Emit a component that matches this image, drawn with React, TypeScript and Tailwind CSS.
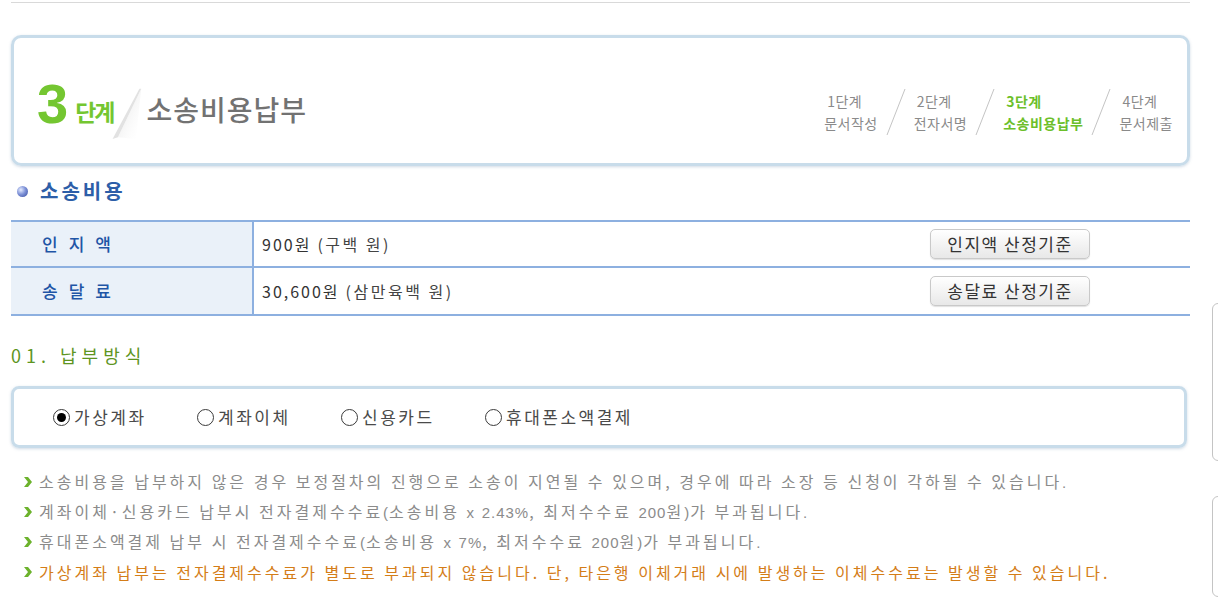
import React from 'react';

const KR = { fontFamily: '"Noto Sans CJK KR", "Noto Sans", sans-serif' };

interface StepProps {
  step: string;
  title: string;
  active?: boolean;
}

const StepSlash: React.FC = () => (
  <svg width="20" height="48" viewBox="0 0 20 48" className="shrink-0">
    <line x1="19" y1="1" x2="1" y2="47" stroke="#c4c4c4" strokeWidth="1" />
  </svg>
);

const Step: React.FC<StepProps> = ({ step, title, active }) => (
  <div className={`flex flex-col text-[14px] leading-[22px] tracking-[0.5px] ${active ? 'text-[#6cbf2a] font-bold' : 'text-[#8a8a8a]'}`}>
    <span className="pl-[3px]">{step}</span>
    <span>{title}</span>
  </div>
);

const Radio: React.FC<{ label: string; checked?: boolean }> = ({ label, checked }) => (
  <label className="flex items-center w-[144px] shrink-0 whitespace-nowrap text-[17px] tracking-[2.5px] text-[#4a4a4a]">
    <span className="w-[17px] h-[17px] shrink-0 rounded-full border-[1.5px] border-[#3a3a3a] flex items-center justify-center mr-[4px] bg-white">
      {checked && <span className="w-[9px] h-[9px] rounded-full bg-black" />}
    </span>
    {label}
  </label>
);

const Chevron: React.FC = () => (
  <svg width="8" height="10" viewBox="0 0 8 10" className="shrink-0 mr-[7px]">
    <polygon points="0,0 4,0 8,5 4,10 0,10 4,5" fill="#6cb22c" />
  </svg>
);

// digits and latin bits are narrower in the original than the hangul around them
const NoteText: React.FC<{ text: string }> = ({ text }) => (
  <>
    {text.split(/([0-9x%.()]+)/).map((part, i) =>
      i % 2 === 1 ? (
        <span key={i} className="text-[15px] tracking-[1px]" style={{ fontFamily: '"Liberation Sans", sans-serif' }}>
          {part}
        </span>
      ) : (
        <span key={i}>{part}</span>
      )
    )}
  </>
);

const FeeRow: React.FC<{ label: string; amount: string; words: string; button: string; last?: boolean }> = ({ label, amount, words, button, last }) => (
  <div className={`flex h-[46px] ${last ? '' : 'border-b-2 border-[#8db0e0]'}`}>
    <div className="w-[243px] bg-[#eaf1f9] border-r-2 border-[#8db0e0] flex items-center pl-[31px] text-[17px] font-medium tracking-[11px] text-[#1f55a6]">
      {label}
    </div>
    <div className="flex-1 flex items-center pl-[8px] text-[16px] text-[#333]">
      <span className="tracking-[2px]">{amount}</span>
      <span className="ml-[6px] tracking-[2.5px] text-[#444]">{words}</span>
      <button className="ml-auto mr-[100px] w-[160px] h-[30px] rounded-[5px] border border-[#c9c9c9] bg-gradient-to-b from-white to-[#e8e8e8] shadow-[0_1px_1px_rgba(0,0,0,0.12)] text-[17px] tracking-[1.5px] text-[#333]">
        {button}
      </button>
    </div>
  </div>
);

export default function App() {
  const notes = [
    '소송비용을 납부하지 않은 경우 보정절차의 진행으로 소송이 지연될 수 있으며, 경우에 따라 소장 등 신청이 각하될 수 있습니다.',
    '계좌이체·신용카드 납부시 전자결제수수료(소송비용 x 2.43%, 최저수수료 200원)가 부과됩니다.',
    '휴대폰소액결제 납부 시 전자결제수수료(소송비용 x 7%, 최저수수료 200원)가 부과됩니다.',
  ];

  return (
    <div className="w-[1218px] h-[597px] overflow-hidden bg-white flex" style={KR}>
      <div className="w-[1179px] ml-[11px] shrink-0 flex flex-col">
        <div className="mt-[2px] h-px bg-[#d9d9d9]" />

        {/* step box */}
        <div className="mt-[32px] h-[131px] rounded-[10px] border-[3px] border-[#c8dcea] shadow-[0_1px_3px_rgba(120,150,180,0.35)] flex items-center pl-[23px] pr-[14px]">
          <div className="flex items-end h-[60px] mt-[2px]">
            <span className="text-[56px] leading-[56px] font-bold text-[#74c631]" style={{ fontFamily: '"Liberation Sans", sans-serif' }}>3</span>
            <span className="ml-[7px] mb-[6px] text-[23px] leading-[30px] font-bold text-[#74c631] tracking-[-2px]">단계</span>
            <svg width="34" height="62" viewBox="0 0 38 62" className="-ml-[4px] mb-[-12px]">
              <defs>
                <linearGradient id="sh" x1="0" y1="0" x2="1" y2="1">
                  <stop offset="0" stopColor="#d8d8d8" stopOpacity="0.9" />
                  <stop offset="1" stopColor="#ffffff" stopOpacity="0" />
                </linearGradient>
              </defs>
              <polygon points="34,4 36,4 10,58 4,60" fill="#e2e2e2" />
              <polygon points="36,4 10,58 30,60" fill="url(#sh)" />
            </svg>
            <span className="ml-[3px] mb-[7px] text-[28px] leading-[32px] font-medium text-[#727272] tracking-[1px]">소송비용납부</span>
          </div>
          <div className="ml-auto flex items-center gap-[8px] mt-[22px]">
            <Step step="1단계" title="문서작성" />
            <StepSlash />
            <Step step="2단계" title="전자서명" />
            <StepSlash />
            <Step step="3단계" title="소송비용납부" active />
            <StepSlash />
            <Step step="4단계" title="문서제출" />
          </div>
        </div>

        {/* heading */}
        <div className="mt-[10px] h-[30px] flex items-center pl-[6px]">
          <span className="w-[11px] h-[11px] rounded-full bg-[radial-gradient(circle_at_35%_35%,#e6ecff_0%,#7f93d8_45%,#34489c_100%)] mr-[12px]" />
          <span className="text-[20px] font-bold tracking-[3px] text-[#2d5ea8]">소송비용</span>
        </div>

        {/* fee table */}
        <div className="mt-[14px] border-y-2 border-[#8db0e0]">
          <FeeRow label="인지액" amount="900원" words="(구백 원)" button="인지액 산정기준" />
          <FeeRow label="송달료" amount="30,600원" words="(삼만육백 원)" button="송달료 산정기준" last />
        </div>

        {/* payment method */}
        <div className="mt-[24px] h-[30px] flex items-center text-[18px] tracking-[5px] text-[#5e951f]">01. 납부방식</div>

        <div className="mt-[16px] w-[1176px] h-[62px] rounded-[8px] border-[3px] border-[#c8dcea] shadow-[0_1px_3px_rgba(120,150,180,0.35)] flex items-center pl-[39px]">
          <Radio label="가상계좌" checked />
          <Radio label="계좌이체" />
          <Radio label="신용카드" />
          <Radio label="휴대폰소액결제" />
        </div>

        {/* notes */}
        <ul className="mt-[19px] pl-[13px] flex flex-col">
          {notes.map((n) => (
            <li key={n} className="h-[30px] flex items-center text-[16px] tracking-[3px] text-[#8b8b8b] whitespace-nowrap">
              <Chevron />
              <span>
                <NoteText text={n} />
              </span>
            </li>
          ))}
          <li className="h-[30px] flex items-center text-[16px] tracking-[3px] text-[#d47d18] whitespace-nowrap">
            <Chevron />
            가상계좌 납부는 전자결제수수료가 별도로 부과되지 않습니다. 단, 타은행 이체거래 시에 발생하는 이체수수료는 발생할 수 있습니다.
          </li>
        </ul>
      </div>

      {/* side column, cut off by the window */}
      <div className="ml-[22px] shrink-0 w-[200px] flex flex-col">
        <div className="mt-[303px] h-[188px] rounded-[6px] border border-[#c4c4c4]" />
        <div className="mt-[35px] h-[120px] rounded-[6px] border border-[#c4c4c4]" />
      </div>
    </div>
  );
}
